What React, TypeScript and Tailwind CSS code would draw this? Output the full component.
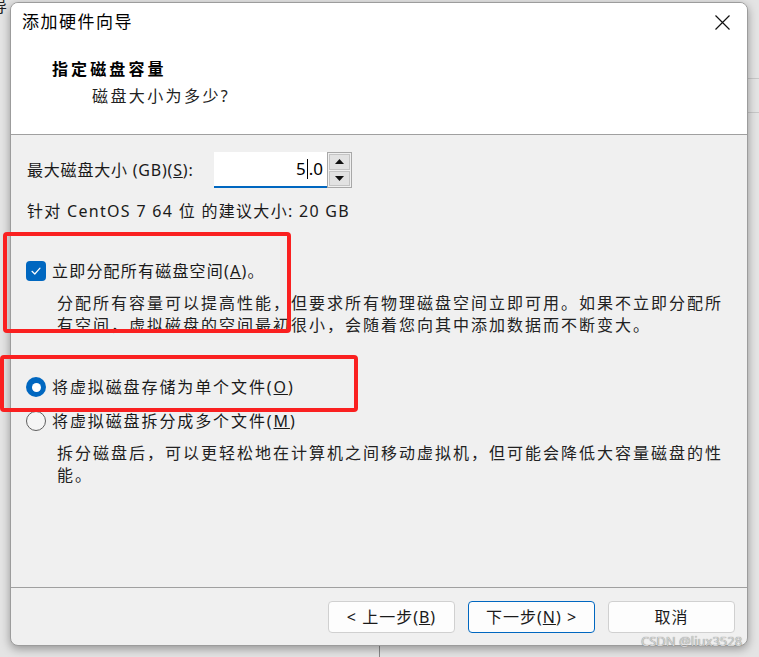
import React from "react";

const FONT = '"Noto Sans", "Noto Sans CJK SC", sans-serif';

function Check() {
  return (
    <div className="w-[20px] h-[20px] rounded-[4px] bg-[#0067c0] flex items-center justify-center shrink-0">
      <svg width="12" height="12" viewBox="0 0 12 12" fill="none">
        <path d="M2 6.3 L4.8 9 L10 3.2" stroke="white" strokeWidth="1.2" strokeLinecap="round" strokeLinejoin="round" />
      </svg>
    </div>
  );
}

function Radio({ on }: { on: boolean }) {
  if (on)
    return (
      <div className="w-[20px] h-[20px] rounded-full bg-[#0067c0] flex items-center justify-center shrink-0">
        <div className="w-[9px] h-[9px] rounded-full bg-white" />
      </div>
    );
  return <div className="w-[20px] h-[20px] rounded-full border border-[#5f5f5f] bg-[#f5f5f5] shrink-0" />;
}

function Btn({ children, primary }: { children: React.ReactNode; primary?: boolean }) {
  return (
    <div
      className={
        "w-[127px] h-[32px] rounded-[4px] flex items-center justify-center text-[16px] text-[#1a1a1a] bg-[#fdfdfd] border tracking-[1px] " +
        (primary ? "border-[#0067c0]" : "border-[#d0d0d0]")
      }
    >
      {children}
    </div>
  );
}

export default function App() {
  return (
    <div
      className="relative w-[759px] h-[657px] overflow-hidden bg-[#e4e4e4] pl-[10px] pt-[2px]"
      style={{ fontFamily: FONT }}
    >
      {/* background bits behind the window */}
      <div className="absolute left-[-9px] top-[-6px] text-[16px] text-[#222]">导</div>
      <div className="absolute right-0 top-[78px] w-[11px] h-px bg-[#c8c8c8]" />
      <div className="absolute right-0 top-[112px] w-[11px] h-px bg-[#c8c8c8]" />
      <div className="absolute left-[379px] bottom-0 w-px h-[11px] bg-[#8a8a8a]" />

      <div className="relative w-[738px] h-[644px] flex flex-col border border-[#9c9c9c] rounded-[8px] overflow-hidden bg-[#f0f0f0] shadow-[0_3px_10px_rgba(0,0,0,0.35)]">
        {/* header */}
        <div className="h-[132px] shrink-0 bg-white border-b border-[#a0a0a0] flex flex-col">
          <div className="mt-[7px] h-[24px] flex items-center justify-between pl-[11px] pr-[17px]">
            <span className="text-[17px] leading-[24px] text-black tracking-[1.5px]">添加硬件向导</span>
            <svg width="15" height="15" viewBox="0 0 15 15">
              <path d="M0.5 0.5 L14.5 14.5 M14.5 0.5 L0.5 14.5" stroke="#111" strokeWidth="1.2" />
            </svg>
          </div>
          <div className="mt-[24px] ml-[41px] h-[22px] leading-[22px] text-[16px] font-bold text-black tracking-[3.1px]">
            指定磁盘容量
          </div>
          <div className="mt-[5px] ml-[81px] h-[22px] leading-[22px] text-[16px] text-[#222] tracking-[2.4px]">
            磁盘大小为多少?
          </div>
        </div>

        {/* body */}
        <div className="h-[452px] shrink-0 flex flex-col text-[16px] text-[#1a1a1a]">
          <div className="mt-[17px] ml-[16px] h-[36px] flex items-center">
            <span className="tracking-[0.8px] w-[187px] whitespace-nowrap">
              最大磁盘大小 (GB)(<span className="underline">S</span>):
            </span>
            <div className="w-[113px] h-[36px] bg-white border-b-2 border-[#0067c0] flex items-center justify-end pr-[4px] text-[17px] text-black">
              5<span className="inline-block w-px h-[20px] bg-black mx-[1px]" />.0
            </div>
            <div className="w-[25px] h-[36px] border border-[#a8a8a8] flex flex-col p-px gap-px bg-[#f0f0f0]">
              <div className="flex-1 bg-[#e2e2e2] border border-[#c4c4c4] flex items-center justify-center">
                <svg width="9" height="5" viewBox="0 0 9 5"><path d="M0 5 L4.5 0 L9 5 Z" fill="#111" /></svg>
              </div>
              <div className="flex-1 bg-[#e2e2e2] border border-[#c4c4c4] flex items-center justify-center">
                <svg width="9" height="5" viewBox="0 0 9 5"><path d="M0 0 L9 0 L4.5 5 Z" fill="#111" /></svg>
              </div>
            </div>
          </div>

          <div className="mt-[12px] ml-[16px] h-[22px] leading-[22px] tracking-[1.3px] whitespace-nowrap">
            针对 CentOS 7 64 位 的建议大小: 20 GB
          </div>

          <div className="mt-[38px] ml-[15px] h-[22px] flex items-center gap-[6px]">
            <Check />
            <span className="leading-[22px] tracking-[1.2px] whitespace-nowrap">
              立即分配所有磁盘空间(<span className="underline">A</span>)。
            </span>
          </div>
          <div className="mt-[10px] ml-[46px] leading-[22px] tracking-[2px] text-[#222] whitespace-nowrap">
            分配所有容量可以提高性能，但要求所有物理磁盘空间立即可用。如果不立即分配所
            <br />
            有空间，虚拟磁盘的空间最初很小，会随着您向其中添加数据而不断变大。
          </div>

          <div className="mt-[40px] ml-[15px] h-[22px] flex items-center gap-[6px]">
            <Radio on />
            <span className="leading-[22px] tracking-[1.9px] whitespace-nowrap">
              将虚拟磁盘存储为单个文件(<span className="underline">O</span>)
            </span>
          </div>
          <div className="mt-[12px] ml-[15px] h-[22px] flex items-center gap-[6px]">
            <Radio on={false} />
            <span className="leading-[22px] tracking-[1.9px] whitespace-nowrap">
              将虚拟磁盘拆分成多个文件(<span className="underline">M</span>)
            </span>
          </div>
          <div className="mt-[10px] ml-[46px] leading-[22px] tracking-[2px] text-[#222] whitespace-nowrap">
            拆分磁盘后，可以更轻松地在计算机之间移动虚拟机，但可能会降低大容量磁盘的性
            <br />
            能。
          </div>
        </div>

        {/* footer */}
        <div className="flex-1 border-t border-[#a0a0a0] flex justify-end items-start pt-[13px] pr-[12px] gap-[13px]">
          <Btn>
            &lt; 上一步(<span className="underline">B</span>)
          </Btn>
          <Btn primary>
            下一步(<span className="underline">N</span>) &gt;
          </Btn>
          <Btn>取消</Btn>
        </div>
      </div>

      {/* annotation boxes */}
      <div className="absolute left-[3px] top-[232px] w-[288px] h-[101px] border-[4px] border-[#fa2020] rounded-[4px]" />
      <div className="absolute left-0 top-[355px] w-[358px] h-[57px] border-[4px] border-[#fa2020] rounded-[4px]" />

      {/* watermark */}
      <div
        className="absolute left-[641px] top-[633px] text-[13px] leading-[16px] text-[#d4d4d4] whitespace-nowrap"
        style={{ textShadow: "0 0 1px #666" }}
      >
        CSDN @liux3528
      </div>
    </div>
  );
}
